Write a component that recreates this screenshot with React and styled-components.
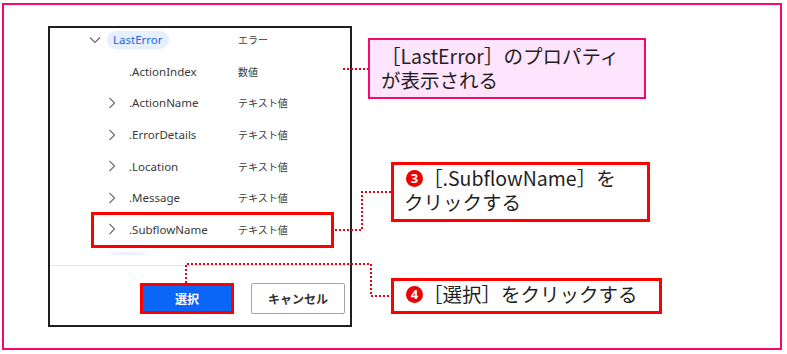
import React from 'react'
import styled, { createGlobalStyle, css } from 'styled-components'

const GlobalStyle = createGlobalStyle`
  html, body {
    margin: 0;
    padding: 0;
    background: #ffffff;
  }
  body {
    font-family: "Noto Sans", "Noto Sans CJK JP", sans-serif;
    color: #222;
  }
`;

const rows = [
  { level: 0, name: 'LastError', type: 'エラー', pill: true, open: true },
  { level: 1, name: '.ActionIndex', type: '数値', leaf: true },
  { level: 1, name: '.ActionName', type: 'テキスト値' },
  { level: 1, name: '.ErrorDetails', type: 'テキスト値' },
  { level: 1, name: '.Location', type: 'テキスト値' },
  { level: 1, name: '.Message', type: 'テキスト値' },
  { level: 1, name: '.SubflowName', type: 'テキスト値', highlight: true },
  { level: 0, name: '', type: '', pill: true, leaf: true, ghost: true },
];

function Chevron({ open }) {
  if (open) {
    return (
      <svg width="12" height="8" viewBox="0 0 12 8">
        <polyline points="1,1.5 6,6.5 11,1.5" fill="none" stroke="#6b6b6b" strokeWidth="1.2" />
      </svg>
    );
  }
  return (
    <svg width="8" height="12" viewBox="0 0 8 12">
      <polyline points="1.5,0.8 6.5,6 1.5,11.2" fill="none" stroke="#6b6b6b" strokeWidth="1.2" />
    </svg>
  );
}

export default function App() {
  return (
    <>
      <GlobalStyle />
      <Page>
        <Frame>
          <Dialog>
            <List>
              {rows.map((row, i) => (
                <Row key={i} $highlight={row.highlight}>
                  <NameCell $level={row.level}>
                    <ChevronBox>{!row.leaf && <Chevron open={row.open} />}</ChevronBox>
                    {row.pill ? (
                      <Pill $ghost={row.ghost}>{row.name}</Pill>
                    ) : (
                      <Name>{row.name}</Name>
                    )}
                  </NameCell>
                  <TypeCell>{row.type}</TypeCell>
                </Row>
              ))}
            </List>
            <Divider />
            <Footer>
              <Button $primary>選択</Button>
              <Button>キャンセル</Button>
            </Footer>
          </Dialog>
          <Notes>
            <Callout $pink $left={16} $top={12} $width={278} $height={61}>
              <Line>［LastError］のプロパティ</Line>
              <Line>が表示される</Line>
            </Callout>
            <Callout $left={39} $top={63} $width={259} $height={60}>
              <Line><Badge>3</Badge>［.SubflowName］を</Line>
              <Line>クリックする</Line>
            </Callout>
            <Callout $left={39} $top={56} $width={271} $height={36} $single>
              <Line><Badge>4</Badge>［選択］をクリックする</Line>
            </Callout>
          </Notes>
        </Frame>
        <Leaders width="787" height="354" viewBox="0 0 787 354">
          <polyline points="343,69 368,69" />
          <polyline points="335,230 362,230 362,192 391,192" />
          <polyline points="186,283 186,264 371,264 371,296 391,296" />
        </Leaders>
      </Page>
    </>
  )
}

const Page = styled.div`
  position: relative;
  width: 787px;
  height: 354px;
  overflow: hidden;
  background: #fff;
`;

const Frame = styled.div`
  box-sizing: border-box;
  width: 780px;
  height: 347px;
  margin: 3px 0 0 2px;
  border: 2px solid #f5096b;
  padding: 21px 0 0 44px;
  display: flex;
  align-items: flex-start;
`;

const Dialog = styled.div`
  box-sizing: border-box;
  width: 304px;
  height: 301px;
  border: 2px solid #1e1e1e;
  background: #fff;
  display: flex;
  flex-direction: column;
  overflow: hidden;
  flex-shrink: 0;
`;

const List = styled.div`
  height: 231px;
  margin-top: -4px;
  overflow: hidden;
  flex-shrink: 0;
`;

const Row = styled.div`
  position: relative;
  height: 31.6px;
  display: grid;
  grid-template-columns: 188px 1fr;
  align-items: center;
  ${p => p.$highlight && css`
    &::after {
      content: '';
      position: absolute;
      left: 41px;
      right: 16px;
      top: -2px;
      bottom: -3px;
      border: 3px solid #ff0000;
    }
  `}
`;

const NameCell = styled.div`
  display: flex;
  align-items: center;
  padding-left: ${p => 37 + p.$level * 17}px;
`;

const ChevronBox = styled.span`
  width: 16px;
  height: 16px;
  display: flex;
  align-items: center;
  justify-content: center;
  flex-shrink: 0;
`;

const Pill = styled.span`
  margin-left: 4px;
  height: 18px;
  line-height: 18px;
  padding: 0 6px;
  border-radius: 9px;
  background: #e6f0fd;
  color: #2464e0;
  font-size: 11.5px;
  ${p => p.$ghost && css`
    width: 30px;
    background: #eaf2fd;
  `}
`;

const Name = styled.span`
  margin-left: 9px;
  font-size: 11.5px;
  color: #3a3a3a;
`;

const TypeCell = styled.span`
  font-family: "Noto Sans CJK JP", sans-serif;
  font-size: 10px;
  color: #3a3a3a;
`;

const Divider = styled.div`
  height: 1px;
  background: #e4e6ea;
  margin-top: 10px;
  flex-shrink: 0;
`;

const Footer = styled.div`
  display: flex;
  justify-content: flex-end;
  gap: 17px;
  padding: 17px 5px 0 0;
`;

const Button = styled.button`
  box-sizing: border-box;
  width: 94px;
  height: 31px;
  font-family: "Noto Sans CJK JP", sans-serif;
  font-weight: 700;
  font-size: 12px;
  border-radius: 2px;
  cursor: pointer;
  ${p => p.$primary ? css`
    background: #0a66f7;
    color: #fff;
    border: 3px solid #ff0000;
    border-radius: 0;
  ` : css`
    background: #fff;
    color: #333;
    border: 1px solid #a3a3a3;
  `}
`;

const Notes = styled.div`
  display: flex;
  flex-direction: column;
  align-items: flex-start;
`;

const Callout = styled.div`
  box-sizing: border-box;
  margin: ${p => p.$top}px 0 0 ${p => p.$left}px;
  width: ${p => p.$width}px;
  height: ${p => p.$height}px;
  display: flex;
  flex-direction: column;
  font-family: "Noto Sans CJK JP", sans-serif;
  font-size: 19.5px;
  color: #1f1f1f;
  white-space: nowrap;
  ${p => p.$pink ? css`
    background: #ffe4fe;
    border: 2px solid #f5096b;
    padding: 4px 0 0 11px;
  ` : css`
    background: #fff;
    border: 3px solid #ff0000;
    padding: ${p.$single ? '1px' : '1px'} 0 0 10px;
  `}
`;

const Line = styled.div`
  height: 24px;
  line-height: 24px;
  display: flex;
  align-items: center;
`;

const Badge = styled.span`
  display: inline-flex;
  align-items: center;
  justify-content: center;
  width: 17px;
  height: 17px;
  border-radius: 50%;
  background: #ee0000;
  color: #fff;
  font-family: "Noto Sans", sans-serif;
  font-weight: 700;
  font-size: 13px;
  line-height: 1;
  margin-left: 2px;
  flex-shrink: 0;
`;

const Leaders = styled.svg`
  position: absolute;
  left: 0;
  top: 0;
  pointer-events: none;
  polyline {
    fill: none;
    stroke: #e60012;
    stroke-width: 2;
    stroke-dasharray: 2 2;
  }
`;
